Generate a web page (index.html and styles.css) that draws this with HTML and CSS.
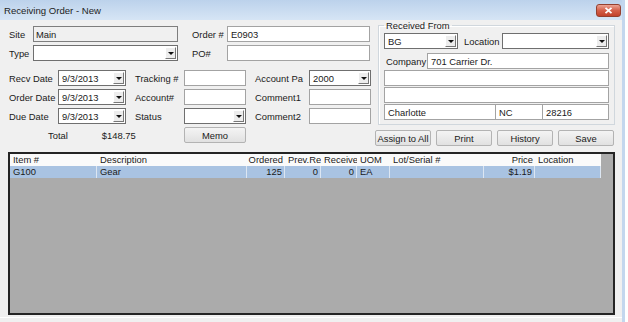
FILE: index.html
```html
<!DOCTYPE html>
<html lang="en">
<head>
    <meta charset="UTF-8">
    <title>Receiving Order - New</title>
    <link rel="stylesheet" href="styles.css">
</head>
<body>

<div class="window">
    <!-- Заголовок окна -->
    <div class="titlebar">
        <span class="title">Receiving Order - New</span>
        <span class="close">
            <svg width="9" height="7" viewBox="0 0 9 7"><path d="M1.5 0.8 L7.5 6.2 M7.5 0.8 L1.5 6.2" stroke="#fff" stroke-width="1.8"/></svg>
        </span>
    </div>

    <div class="client">
        <div class="top">
            <!-- Левая часть формы -->
            <div class="left">
                <div class="head-grid">
                    <span class="lbl">Site</span>
                    <div class="field readonly">Main</div>
                    <span class="lbl gap14">Order #</span>
                    <div class="field">E0903</div>

                    <span class="lbl">Type</span>
                    <div class="field combo"><span class="val"></span><span class="arrow"></span></div>
                    <span class="lbl gap14">PO#</span>
                    <div class="field"></div>
                </div>

                <div class="detail-grid">
                    <span class="lbl">Recv Date</span>
                    <div class="field combo"><span class="val">9/3/2013</span><span class="arrow"></span></div>
                    <span class="lbl gap9">Tracking #</span>
                    <div class="field"></div>
                    <span class="lbl gap9">Account Pa</span>
                    <div class="field combo"><span class="val">2000</span><span class="arrow"></span></div>

                    <span class="lbl">Order Date</span>
                    <div class="field combo"><span class="val">9/3/2013</span><span class="arrow"></span></div>
                    <span class="lbl gap9">Account#</span>
                    <div class="field"></div>
                    <span class="lbl gap9">Comment1</span>
                    <div class="field"></div>

                    <span class="lbl">Due Date</span>
                    <div class="field combo"><span class="val">9/3/2013</span><span class="arrow"></span></div>
                    <span class="lbl gap9">Status</span>
                    <div class="field combo"><span class="val"></span><span class="arrow"></span></div>
                    <span class="lbl gap9">Comment2</span>
                    <div class="field"></div>

                    <div class="total"><span>Total</span><span>$148.75</span></div>
                    <span></span>
                    <button class="btn">Memo</button>
                </div>
            </div>

            <!-- Правая часть: Received From -->
            <div class="right">
                <fieldset class="group">
                    <legend>Received From</legend>
                    <div class="g-row">
                        <div class="field combo bg"><span class="val">BG</span><span class="arrow"></span></div>
                        <span class="lbl loc">Location</span>
                        <div class="field combo grow"><span class="val"></span><span class="arrow"></span></div>
                    </div>
                    <div class="g-row first">
                        <span class="lbl company">Company</span>
                        <div class="field grow">701 Carrier Dr.</div>
                    </div>
                    <div class="g-row">
                        <div class="field grow"></div>
                    </div>
                    <div class="g-row">
                        <div class="field grow"></div>
                    </div>
                    <div class="g-row">
                        <div class="field city">Charlotte</div>
                        <div class="field state">NC</div>
                        <div class="field grow">28216</div>
                    </div>
                </fieldset>
                <div class="buttons">
                    <button class="btn">Assign to All</button>
                    <button class="btn">Print</button>
                    <button class="btn">History</button>
                    <button class="btn">Save</button>
                </div>
            </div>
        </div>

        <!-- Таблица позиций -->
        <div class="grid">
            <div class="g-line head">
                <span>Item #</span>
                <span>Description</span>
                <span class="num">Ordered</span>
                <span>Prev.Re</span>
                <span>Receive</span>
                <span>UOM</span>
                <span>Lot/Serial #</span>
                <span class="num">Price</span>
                <span>Location</span>
            </div>
            <div class="g-line selected">
                <span>G100</span>
                <span>Gear</span>
                <span class="num">125</span>
                <span class="num">0</span>
                <span class="num">0</span>
                <span>EA</span>
                <span></span>
                <span class="num">$1.19</span>
                <span></span>
            </div>
        </div>
    </div>
</div>

</body>
</html>
```

FILE: styles.css
```css
* {
    margin: 0;
    padding: 0;
    box-sizing: border-box;
}

body {
    background: #fff;
    font-family: "Liberation Sans", Arial, sans-serif;
    font-size: 9.4px;
    color: #1a1a1a;
}

/* Окно */
.window {
    width: 625px;
    height: 322px;
    background: #f0f0f0;
    border-right: 3px solid #c3d7ee;
}

.titlebar {
    height: 20px;
    display: flex;
    align-items: center;
    justify-content: space-between;
    padding: 0 1px 0 4px;
    background: linear-gradient(#bcd2eb, #d6e5f5);
    font-size: 9.6px;
    color: #1e1e1e;
}

.close {
    width: 25px;
    height: 13px;
    display: flex;
    align-items: center;
    justify-content: center;
    background: linear-gradient(#eba393, #d4604a 50%, #c2422b);
    border: 1px solid #94402f;
    border-radius: 3px;
}

.client {
    height: 298px;
    padding: 0 7px 0 8px;
    border-bottom: 1px solid #fff;
}

.top {
    display: flex;
    align-items: flex-start;
}

/* Левая часть */
.left {
    width: 362px;
    margin-left: 1px;
    padding-top: 6px;
}

.head-grid {
    display: grid;
    grid-template-columns: 24px 145px 49px 143px;
    grid-auto-rows: 16px;
    row-gap: 3px;
    align-items: center;
}

.detail-grid {
    margin-top: 9px;
    display: grid;
    grid-template-columns: 49px 68px 58px 62px 63px 62px;
    grid-auto-rows: 16px;
    row-gap: 3px;
    align-items: center;
}

.lbl {
    white-space: nowrap;
}

.gap14 {
    padding-left: 14px;
}

.gap9 {
    padding-left: 9px;
}

.total {
    grid-column: 1 / 3;
    display: flex;
    gap: 34px;
    padding-left: 39px;
}

/* Поля ввода */
.field {
    height: 16px;
    display: flex;
    align-items: center;
    padding-left: 3px;
    background: #fff;
    border: 1px solid #a3a3a3;
    white-space: nowrap;
    overflow: hidden;
}

.field.readonly {
    background: #f0f0f0;
    border-color: #7e7e7e;
    padding-left: 2px;
}

.field.combo {
    border-color: #6f6f6f;
    padding-right: 1px;
}

.combo .val {
    flex: 1;
}

.combo .arrow {
    width: 11px;
    height: 12px;
    display: flex;
    align-items: center;
    justify-content: center;
    background: #ededed;
    border-top: 1px solid #fff;
    border-left: 1px solid #fff;
    border-right: 1px solid #777;
    border-bottom: 1px solid #777;
}

.combo .arrow::after {
    content: "";
    border-left: 3px solid transparent;
    border-right: 3px solid transparent;
    border-top: 3px solid #111;
}

/* Кнопки */
.btn {
    height: 16px;
    font: inherit;
    color: #1a1a1a;
    background: linear-gradient(#f4f4f4, #e1e1e1);
    border: 1px solid #b3b3b3;
    border-radius: 2px;
}

/* Правая часть */
.right {
    width: 240px;
    margin-left: 4px;
}

.group {
    margin-left: 3px;
    width: 237px;
    height: 105px;
    min-width: 0;
    padding: 2px 5px 0 5px;
    border: 1px solid #d0d7dd;
    box-shadow: inset 1px 1px 0 #fff;
}

.group legend {
    padding: 0 2px;
    line-height: 11px;
}

.g-row {
    display: flex;
    align-items: center;
    margin-top: 1px;
}

.g-row:first-of-type {
    margin-top: 0;
}

.g-row.first {
    margin-top: 4px;
}

.grow {
    flex: 1;
}

.bg {
    width: 74px;
}

.loc {
    width: 44px;
    padding-left: 6px;
}

.company {
    width: 43px;
    padding-left: 2px;
}

.city {
    width: 112px;
}

.state {
    width: 48px;
    margin-left: -1px;
}

.city + .state + .grow {
    margin-left: -1px;
}

.buttons {
    display: flex;
    gap: 5px;
    margin-top: 5px;
}

.buttons .btn {
    width: 56px;
}

/* Таблица */
.grid {
    margin-top: 6px;
    height: 163px;
    background: #ababab;
    border: 2px solid #242424;
}

.g-line {
    width: 591px;
    height: 12px;
    display: grid;
    grid-template-columns: 87px 150px 38px 36px 36px 33px 94px 51px 66px;
    line-height: 12px;
}

.g-line span {
    padding: 0 2px 0 3px;
    white-space: nowrap;
    overflow: hidden;
}

.g-line .num {
    padding: 0 2px 0 0;
    text-align: right;
}

.g-line.head {
    background: #fafafa;
}

.g-line.selected {
    background: #a9c3e2;
}

.g-line.selected span {
    border-right: 1px solid #dce6f2;
}
```
